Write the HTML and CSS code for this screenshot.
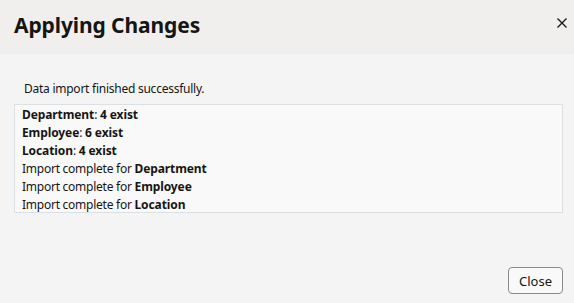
FILE: index.html
```html
<!DOCTYPE html>
<html>
<head>
	<meta charset="UTF-8">
	<title>Applying Changes</title>
	<link rel="stylesheet" href="styles.css">
</head>
<body>
<div class="dialog">
	<div class="dlg-head">
		<h1 class="dlg-title">Applying Changes</h1>
		<span class="dlg-x">
			<svg width="12" height="12" viewBox="0 0 12 12"><path d="M1.5 1.5L10.5 10.5M10.5 1.5L1.5 10.5" stroke="#161513" stroke-width="1.3" fill="none"/></svg>
		</span>
	</div>
	<div class="dlg-body">
		<p class="msg">Data import finished successfully.</p>
		<ul class="log">
			<li><b>Department</b>: <b>4 exist</b></li>
			<li><b>Employee</b>: <b>6 exist</b></li>
			<li><b>Location</b>: <b>4 exist</b></li>
			<li>Import complete for <b>Department</b></li>
			<li>Import complete for <b>Employee</b></li>
			<li>Import complete for <b>Location</b></li>
		</ul>
	</div>
	<div class="dlg-foot">
		<button class="btn">Close</button>
	</div>
</div>
</body>
</html>
```

FILE: styles.css
```css
body,ul,li,p,h1{
	padding: 0;
	margin: 0;
}
li{
	list-style:none;
}
body{
	background:#f4f4f4;
	font-family:"Noto Sans","Open Sans",sans-serif;
	color:#161513;
}
.dialog{
	width:574px;
	height:303px;
	display:flex;
	flex-direction:column;
}
.dlg-head{
	height:54px;
	background:#f0efed;
	display:flex;
	align-items:center;
	justify-content:space-between;
	padding:0 6px 0 14px;
	box-sizing:border-box;
}
.dlg-title{
	font-size:21px;
	font-weight:700;
	letter-spacing:-0.1px;
	margin-top:-5px;
}
.dlg-x{
	width:12px;
	height:12px;
	display:flex;
	margin-top:-9px;
}
.dlg-body{
	flex:1;
	padding:27px 11px 0 14px;
}
.msg{
	font-size:12px;
	line-height:16px;
	letter-spacing:-0.25px;
	padding-left:10px;
	margin-bottom:7px;
}
.log{
	background:#f9f9f9;
	border:1px solid #dbe0e5;
	padding:1px 6px 0 7px;
	font-size:12px;
	line-height:18px;
	letter-spacing:-0.25px;
	height:106px;
}
.log b{
	font-weight:700;
	letter-spacing:-0.1px;
}
.dlg-foot{
	display:flex;
	justify-content:flex-end;
	padding:0 11px 9px 0;
}
.btn{
	width:55px;
	height:27px;
	border:1px solid #8b8a88;
	border-radius:4px;
	background:#f9f9f9;
	font-family:"Noto Sans","Open Sans",sans-serif;
	font-size:13px;
	color:#161513;
	padding:0;
}
```
